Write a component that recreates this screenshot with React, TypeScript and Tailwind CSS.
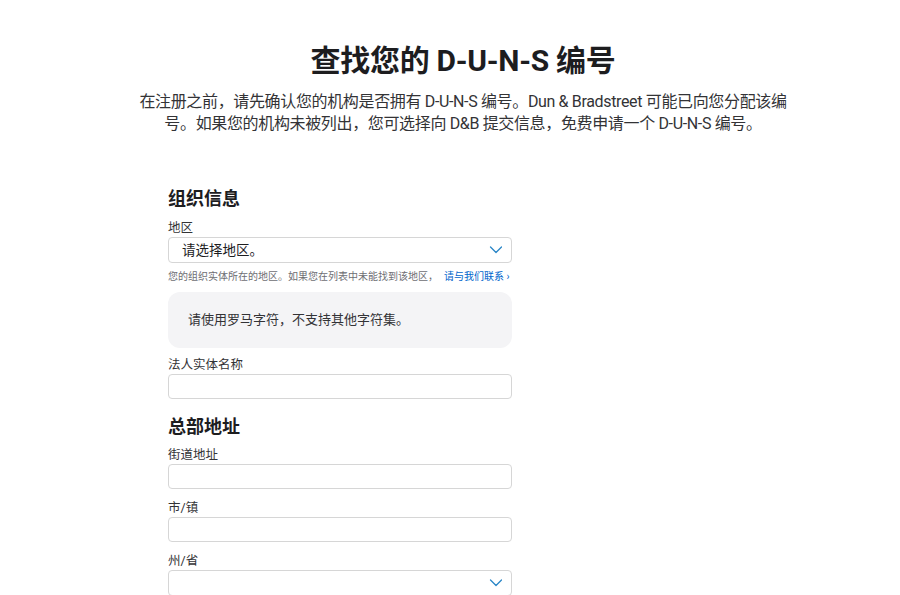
import React from "react";

const font = { fontFamily: '"Roboto", "Noto Sans CJK SC", sans-serif' };

function Chevron() {
  return (
    <svg width="14" height="9" viewBox="0 0 14 9" fill="none" className="absolute right-[8px] top-1/2 -translate-y-1/2">
      <path d="M1.5 1.5 L7 7 L12.5 1.5" stroke="#2a86c7" strokeWidth="1.3" strokeLinecap="round" strokeLinejoin="round" />
    </svg>
  );
}

function Label({ children }: { children: React.ReactNode }) {
  return <div className="text-[12.5px] leading-[16px] text-[#333336]">{children}</div>;
}

function Input() {
  return <div className="mt-[1px] h-[25px] w-full rounded-[4px] border border-[#d6d6d6] bg-white" />;
}

function Select({ text }: { text?: string }) {
  return (
    <div className="relative mt-[1px] flex h-[26px] w-full items-center rounded-[4px] border border-[#d6d6d6] bg-white pl-[13px] text-[13.5px] text-[#1d1d1f]">
      {text}
      <Chevron />
    </div>
  );
}

export default function App() {
  return (
    <div className="min-h-[595px] w-full bg-white pl-[26px]" style={font}>
      <div className="mx-auto w-[652px] pt-[42px]">
        <h1 className="text-center text-[30px] font-bold leading-[38px] tracking-[-0.3px] text-[#1d1d1f]">查找您的 D-U-N-S 编号</h1>
        <p className="mt-[11px] text-center text-[16px] leading-[22px] tracking-[-0.35px] text-[#333336]">
          在注册之前，请先确认您的机构是否拥有 D-U-N-S 编号。Dun &amp; Bradstreet 可能已向您分配该编号。如果您的机构未被列出，您可选择向 D&amp;B 提交信息，免费申请一个 D-U-N-S 编号。
        </p>
        <div className="ml-[31px] mt-[52px] w-[344px]">
          <h2 className="text-[18px] font-bold leading-[24px] text-[#1d1d1f]">组织信息</h2>
          <div className="mt-[9px]">
            <Label>地区</Label>
            <Select text="请选择地区。" />
            <div className="mt-[7px] whitespace-nowrap text-[10px] leading-[13px] text-[#6e6e73]">
              您的组织实体所在的地区。如果您在列表中未能找到该地区，
              <span className="ml-[6px] text-[#0066cc]">请与我们联系 ›</span>
            </div>
          </div>
          <div className="mt-[9px] flex h-[56px] items-center rounded-[12px] bg-[#f4f4f6] pl-[20px] text-[13px] text-[#333336]">
            请使用罗马字符，不支持其他字符集。
          </div>
          <div className="mt-[9px]">
            <Label>法人实体名称</Label>
            <Input />
          </div>
          <h2 className="mt-[16px] text-[18px] font-bold leading-[24px] text-[#1d1d1f]">总部地址</h2>
          <div className="mt-[8px]">
            <Label>街道地址</Label>
            <Input />
          </div>
          <div className="mt-[11px]">
            <Label>市/镇</Label>
            <Input />
          </div>
          <div className="mt-[11px]">
            <Label>州/省</Label>
            <Select />
          </div>
        </div>
      </div>
    </div>
  );
}
